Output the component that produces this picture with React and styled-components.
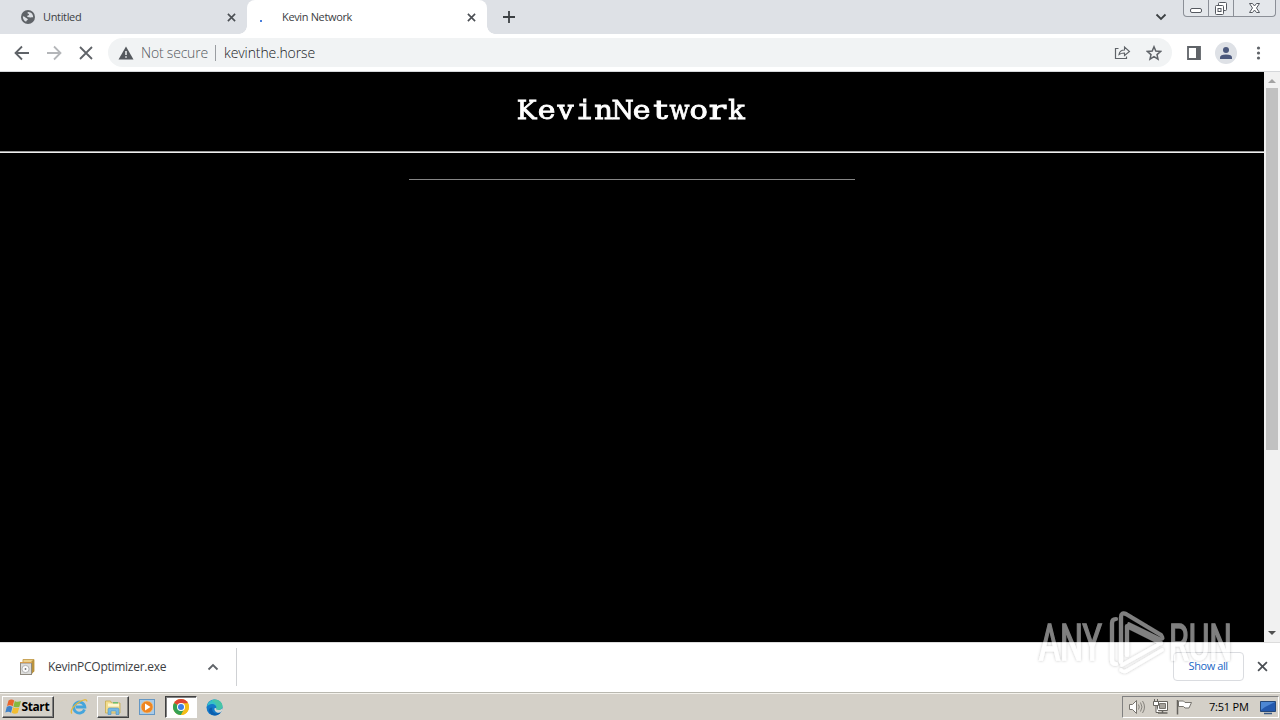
import React from "react";
import styled, { createGlobalStyle } from "styled-components";

const GlobalStyle = createGlobalStyle`
  * {
    box-sizing: border-box;
  }
  body {
    margin: 0;
    overflow: hidden;
    background: #000000;
  }
  svg {
    display: block;
    flex: none;
  }
`;

const Screen = styled.div`
  position: relative;
  width: 1280px;
  height: 720px;
  display: flex;
  flex-direction: column;
  overflow: hidden;
  font-family: "Open Sans", "Noto Sans", sans-serif;
  color: #3c4043;
`;

const Text = styled.span`
  display: block;
  flex: none;
  width: ${(p) => p.$width}px;
  margin-left: ${(p) => p.$gap || 0}px;
  font-size: ${(p) => p.$size || 11}px;
  line-height: 18px;
  letter-spacing: ${(p) => p.$spacing || 0}px;
  font-weight: ${(p) => p.$weight || 400};
  color: ${(p) => p.$color || "#3c4043"};
  white-space: nowrap;
`;

const TabStrip = styled.div`
  display: flex;
  height: 34px;
  flex: none;
  background: #dee1e6;
`;
const Tab = styled.div`
  display: flex;
  align-items: center;
  width: ${(p) => p.$width}px;
  height: 34px;
  padding: 0 11px 0 ${(p) => (p.$active ? 13 : 21)}px;
  border-radius: 8px 8px 0 0;
  background: ${(p) => (p.$active ? "#ffffff" : "transparent")};
`;
const Flare = styled.div`
  align-self: flex-end;
  width: 8px;
  height: 8px;
  margin-left: ${(p) => (p.$left ? -8 : 0)}px;
  background: radial-gradient(
    circle at ${(p) => (p.$left ? "0 0" : "100% 0")},
    transparent 7.5px,
    #ffffff 8px
  );
`;
const Spinner = styled.span`
  width: 2px;
  height: 2px;
  margin-right: 20px;
  margin-top: 7px;
  background: #4a7fdc;
`;
const Push = styled.div`
  flex: 1;
`;
const StripIcon = styled.div`
  padding: ${(p) => p.$pad};
`;
const WindowButtons = styled.div`
  display: flex;
  width: 93px;
  height: 17px;
  margin: 0 4px 0 16px;
  border: 1px solid #8b8f97;
  border-top: 0;
  border-radius: 0 0 4px 4px;
  background: #e4e7eb;
`;
const WindowButton = styled.div`
  display: flex;
  justify-content: center;
  width: ${(p) => p.$width}px;
  border-right: ${(p) => (p.$last ? 0 : 1)}px solid #8b8f97;
`;

const Toolbar = styled.div`
  display: flex;
  align-items: center;
  height: 38px;
  flex: none;
  padding: 0 13px;
  background: #ffffff;
  border-bottom: 1px solid #d5d7da;
`;
const NavButtons = styled.div`
  display: flex;
  gap: 14px;
  width: 95px;
`;
const AddressBar = styled.div`
  display: flex;
  align-items: center;
  width: 1064px;
  height: 29px;
  padding: 0 10px;
  border-radius: 15px;
  background: #f1f3f4;
`;
const Separator = styled.span`
  width: 1px;
  height: 16px;
  margin: 0 8px 0 7px;
  background: #9a9da1;
`;
const Avatar = styled.div`
  display: flex;
  align-items: center;
  justify-content: center;
  width: 22px;
  height: 22px;
  margin: 0 14px 0 14px;
  border-radius: 50%;
  background: #dee1e6;
`;

const Viewport = styled.div`
  display: flex;
  flex: none;
  height: 570px;
`;
const Page = styled.main`
  display: flex;
  flex-direction: column;
  align-items: center;
  width: 1264px;
  background: #000000;
`;
const Heading = styled.h1`
  display: flex;
  height: 36px;
  margin: 20px 0 23px;
  color: #ffffff;
  font-family: "DejaVu Serif", serif;
  font-size: 26px;
  font-weight: 400;
  line-height: 36px;
  -webkit-text-stroke: 0.8px #ffffff;
`;
const Letter = styled.span`
  display: flex;
  justify-content: center;
  width: 19.1px;
  transform: scaleX(${(p) => p.$stretch});
  font-family: ${(p) => (p.$mono ? '"DejaVu Sans Mono", monospace' : "inherit")};
`;
const WideRule = styled.div`
  width: 100%;
  height: 2px;
  background: #eeeeee;
  border-top: 1px solid #9a9a9a;
`;
const ShortRule = styled.div`
  width: 446px;
  height: 1px;
  margin-top: 26px;
  background: #858585;
`;
const Scrollbar = styled.div`
  display: flex;
  flex-direction: column;
  align-items: center;
  justify-content: space-between;
  width: 16px;
  background: #f1f1f1;
`;
const Thumb = styled.div`
  width: 12px;
  height: 362px;
  margin-bottom: auto;
  background: #c1c1c1;
`;

const Shelf = styled.div`
  display: flex;
  align-items: center;
  flex: none;
  height: 50px;
  padding: 0 12px 2px 19px;
  background: #ffffff;
  border-top: 1px solid #dcdcdc;
`;
const ShelfDivider = styled.div`
  width: 1px;
  height: 38px;
  margin-left: 17px;
  background: #cfd1d4;
`;
const ShowAll = styled.div`
  display: flex;
  align-items: center;
  justify-content: center;
  width: 71px;
  height: 29px;
  margin-right: 13px;
  padding-bottom: 1px;
  border: 1px solid #dadce0;
  border-radius: 4px;
`;

const Taskbar = styled.div`
  display: flex;
  align-items: center;
  flex: none;
  height: 28px;
  padding: 1px 1px 0 2px;
  background: #d4d0c8;
  border-top: 1px solid #b9b8b0;
  box-shadow: inset 0 1px 0 #f4f2ec;
`;
const TaskButton = styled.div`
  display: flex;
  align-items: center;
  justify-content: center;
  width: ${(p) => p.$width}px;
  height: 22px;
  margin-left: ${(p) => p.$gap || 0}px;
  background: ${(p) => (p.$pressed ? "#ffffff" : "#d4d0c8")};
  border: 1px solid;
  border-color: ${(p) =>
    p.$pressed ? "#404040 #ffffff #ffffff #404040" : "#ffffff #404040 #404040 #ffffff"};
  box-shadow: ${(p) => (p.$pressed ? "inset 1px 1px 0 #808080" : "inset -1px -1px 0 #808080")};
`;
const TaskIcon = styled.div`
  margin-left: ${(p) => p.$gap}px;
`;
const Tray = styled.div`
  display: flex;
  align-items: center;
  width: 157px;
  height: 22px;
  padding-left: 5px;
  border: 1px solid;
  border-color: #808080 #ffffff #ffffff #808080;
`;

const Watermark = styled.div`
  position: absolute;
  left: 1030px;
  top: 602px;
`;

const Cross = ({ size = 9, width = 1.8, color = "#4b4f54" }) => (
  <svg width={size} height={size} viewBox="0 0 10 10">
    <path d="M1 1l8 8M9 1l-8 8" stroke={color} strokeWidth={width} />
  </svg>
);

const Globe = () => (
  <svg width="14" height="14" viewBox="0 0 14 14">
    <circle cx="7" cy="7" r="7" fill="#5f6368" />
    <path d="M7.500 2c-1.500.2-1.200 1.500 0 1.800 1 .3.500 1.500-.5 1.700-1.200.2-1.200 1.300 0 1.500 1.500.2 2 .8 3 .4.800-.300 1.500-.200 2.200-.2C12.200 4.300 10.300 2.200 7.500 2zM1.900 6.200C1.500 8.500 3 11 5.200 11.800c0-1 .6-1.300 1.300-1.700.8-.6 0-1.500-.8-1.900C4.300 7.600 3.500 6.300 1.900 6.200z" fill="#dee1e6" />
  </svg>
);

const StartFlag = () => (
  <svg width="17" height="16" viewBox="0 0 17 16">
    <path d="M3.500 1.500c2-1.500 4-1.200 5.700 0L7.800 7.200c-1.800-1.300-3.700-1.200-5.800-.2z" fill="#e8652c" />
    <path d="M9.800 2c2 1.200 4 1 6.200 0l-1.600 5.700c-2 .9-4 .8-6-.3z" fill="#86b83f" />
    <path d="M1.800 7.700c2.200-1 4-.8 5.700.3l-1.500 5.700c-1.700-1.200-3.600-1.200-5.700-.2z" fill="#3f82c9" />
    <path d="M8.200 8.200c2 1.100 4 1.200 6.100.2l-1.600 5.700c-2.100 1-4.100.8-6-.3z" fill="#f2bd32" />
  </svg>
);

const ExplorerE = () => (
  <svg width="18" height="18" viewBox="0 0 18 18">
    <path d="M14.500 11.500A5.500 5.500 0 1 1 14.800 9H6" fill="none" stroke="#45a5dc" strokeWidth="2.900" />
    <path d="M2 15.500C-.5 13 4 7 9.500 3.800 13 1.500 17 .8 16.800 3.500" fill="none" stroke="#e4b83c" strokeWidth="1.300" />
  </svg>
);

const Folder = () => (
  <svg width="18" height="17" viewBox="0 0 18 17">
    <path d="M1.500 2h5l1 2h8.500v10h-14.500z" fill="#f2dc8d" stroke="#c6a94d" strokeWidth=".8" />
    <path d="M4 4.500h11v3H4z" fill="#fdf6cf" />
    <path d="M9 3h5v1.500H9z" fill="#6cbd70" />
    <path d="M4 15.500v-5q0-1.500 1.500-1.500h8q1.500 0 1.500 1.500v5h-3v-3.500H7v3.500z" fill="#74b8e4" stroke="#4e91bf" strokeWidth=".6" />
  </svg>
);

const MediaPlayer = () => (
  <svg width="16" height="16" viewBox="0 0 16 16">
    <rect x=".5" y=".5" width="15" height="15" fill="#a9cbe8" stroke="#6497c4" />
    <circle cx="8" cy="8" r="6" fill="#ee8521" stroke="#f7c078" strokeWidth=".7" />
    <path d="M6 4.500v7L11.500 8z" fill="#ffffff" />
  </svg>
);

const Chrome = () => (
  <svg width="16" height="16" viewBox="0 0 16 16">
    <circle cx="8" cy="8" r="8" fill="#f4bd18" />
    <path d="M8 8L1.070 4A8 8 0 0 1 14.930 4z" fill="#df4534" />
    <path d="M8 8L1.070 4A8 8 0 0 0 8 16l3.400-6z" fill="#35a154" />
    <path d="M8 4.300h7.100A8 8 0 0 1 8 16l3.300-6z" fill="#f4bd18" />
    <circle cx="8" cy="8" r="4" fill="#ffffff" />
    <circle cx="8" cy="8" r="3" fill="#3d7fe6" />
  </svg>
);

const Edge = () => (
  <svg width="17" height="17" viewBox="0 0 17 17">
    <circle cx="8.500" cy="8.500" r="8" fill="#1479c9" />
    <path d="M1 7.500C2 2.500 5.500.5 8.500.5c4.500 0 8 3.200 8 6.700 0 2.500-2 3.800-4.200 3.800-2 0-2.800-.8-2-1.800C11 7 8.500 5 6 5 3.500 5 1.500 6.500 1 7.500z" fill="#35c1c9" />
    <path d="M9 .5c4.500.2 7.500 3.400 7.500 6.700 0 2.500-2 3.800-4.200 3.800-2 0-2.500-.9-2-1.800C11.500 6 9 3 5.500 2z" fill="#55c98b" opacity=".55" />
    <path d="M6.500 8.500c-1.500 3 1.500 6.500 5.500 5.800 1.300-.2 2.200-.7 3-1.300-2.500 4.500-9 4.500-11.500.5-1.500-3 0-5 3-5z" fill="#0c5fae" />
    <path d="M10.300 9c-.7 1 .2 2 2 2 1.500 0 2.700-.4 3.500-1.300l.7 1.500-1.700 2c-3 1.500-7-.7-6.300-4z" fill="#d4d8d4" />
  </svg>
);

const Installer = () => (
  <svg width="16" height="18" viewBox="0 0 16 18">
    <path d="M4 1.500h11v12H4z" fill="#ecd08a" stroke="#c9a55a" />
    <path d="M12.500 3l2.500-1.500v12l-2.500 3z" fill="#b9923e" />
    <rect x="1.500" y="5" width="11" height="11.500" fill="#dddddb" stroke="#8f8a80" />
    <circle cx="6.500" cy="11" r="3.600" fill="#fafafa" stroke="#b5b5b5" />
    <circle cx="6.500" cy="11" r=".9" fill="#777777" />
    <path d="M1 4.500h12" stroke="#d79d4c" />
  </svg>
);

const Speaker = () => (
  <svg width="18" height="16" viewBox="0 0 18 16">
    <path d="M1.500 5.500h3l4-4v13l-4-4h-3z" fill="#fdfdfd" stroke="#77746e" />
    <path d="M10.500 5.500q1.500 2.500 0 5M12.500 3.500q3 4.500 0 9M14.500 2q4 6 0 12" fill="none" stroke="#86837d" />
  </svg>
);

const Network = () => (
  <svg width="17" height="16" viewBox="0 0 17 16">
    <path d="M5.500 2.500h10v9h-10z" fill="#ffffff" stroke="#66635e" />
    <path d="M7.500 4.500h6v5h-6z" fill="#a5a29c" stroke="#77746e" />
    <path d="M6 14h9.500M10.500 12v2" stroke="#66635e" strokeWidth="1.500" />
    <path d="M1.500 2.500h5v4h-5zM2.500 0v2M5.500 0v2M4 7v6.500h3" fill="#ffffff" stroke="#66635e" />
  </svg>
);

const ActionFlag = () => (
  <svg width="17" height="16" viewBox="0 0 17 16">
    <path d="M2.500 2h5l1.500 1.500h6.500L13 9H9L7.500 7.500h-5z" fill="#ffffff" stroke="#77746e" />
    <path d="M1.500 1v14.500" stroke="#66635e" strokeWidth="1.500" />
  </svg>
);

const Monitor = () => (
  <svg width="16" height="15" viewBox="0 0 16 15">
    <path d="M.5 1.500h15v10H.5z" fill="#2459ad" stroke="#254878" />
    <path d="M1 2h14L5 7 1 10z" fill="#4d87d3" />
    <path d="M4 13.500h8" stroke="#385883" strokeWidth="1.500" />
  </svg>
);

const WatermarkLogo = () => (
  <svg width="212" height="80" viewBox="0 0 212 80">
    <defs>
      <filter id="edge" x="-10%" y="-10%" width="120%" height="120%">
        <feDropShadow dx="0" dy="0" stdDeviation="1.800" floodColor="#000000" floodOpacity=".5" />
      </filter>
    </defs>
    <g opacity=".5" filter="url(#edge)" fill="#ffffff" stroke="#ffffff" fontFamily="Roboto, sans-serif" fontSize="50">
      <g strokeWidth="1.400">
        <text x="9" y="57.500" textLength="63" lengthAdjust="spacingAndGlyphs">ANY</text>
        <text x="139" y="57.500" textLength="63" lengthAdjust="spacingAndGlyphs">RUN</text>
      </g>
      <g fill="none" strokeWidth="4.200" strokeLinejoin="round" strokeLinecap="round">
        <path d="M86 17q-4 0-4 4v37q0 4 4 4" />
        <path d="M91 60V15q0-5 5-3l35 21M97 53V24l34 17" />
        <path d="M131 33q4 4-1 4L99 22M131 41L99 59M92 63l34-19M91 68q3 3 7 0l34-20" strokeWidth="3.600" />
      </g>
    </g>
  </svg>
);

const stretch = { K: 1.02, e: 1.15, v: 1.1, i: 1.02, n: 1.12, N: 0.98, t: 1.4, w: 0.9, o: 1.17, r: 1.4, k: 1.05 };

const App = () => {
  return (
    <Screen>
      <GlobalStyle />
      <TabStrip>
        <Tab $width={247}>
          <Globe />
          <Text $width={38} $gap={8} $spacing={-0.35}>Untitled</Text>
          <Push />
          <Cross />
        </Tab>
        <Flare $left />
        <Tab $width={240} $active>
          <Spinner />
          <Text $width={71} $spacing={-0.35}>Kevin Network</Text>
          <Push />
          <Cross />
        </Tab>
        <Flare />
        <StripIcon $pad="11px 0 0 8px">
          <svg width="12" height="12" viewBox="0 0 12 12">
            <path d="M6 0v12M0 6h12" stroke="#3c4043" strokeWidth="1.800" />
          </svg>
        </StripIcon>
        <Push />
        <StripIcon $pad="13px 0 0">
          <svg width="12" height="8" viewBox="0 0 12 8">
            <path d="M1.500 1.500L6 6l4.500-4.500" fill="none" stroke="#3c4043" strokeWidth="1.800" />
          </svg>
        </StripIcon>
        <WindowButtons>
          <WindowButton $width={25}>
            <svg width="13" height="16" viewBox="0 0 13 16">
              <rect x=".5" y="8.500" width="11" height="4" rx="1.500" fill="#ffffff" stroke="#555960" />
            </svg>
          </WindowButton>
          <WindowButton $width={25}>
            <svg width="14" height="16" viewBox="0 0 14 16">
              <rect x="4.500" y="2.500" width="8" height="8" rx="1" fill="#ffffff" stroke="#555960" />
              <rect x="1.500" y="5.500" width="8" height="9" rx="1" fill="#ffffff" stroke="#555960" />
              <rect x="4" y="8.500" width="3" height="3" fill="#ffffff" stroke="#555960" />
            </svg>
          </WindowButton>
          <WindowButton $width={41} $last>
            <svg width="13" height="16" viewBox="0 0 13 16">
              <path d="M1.500 3.500h3l2 2.500 2-2.500h3L8.500 8l3 4.500h-3l-2-2.500-2 2.500h-3l3-4.500z" fill="#ffffff" stroke="#555960" />
            </svg>
          </WindowButton>
        </WindowButtons>
      </TabStrip>

      <Toolbar>
        <NavButtons>
          <svg width="18" height="18" viewBox="0 0 18 18">
            <path d="M16 9H3M9 2.500L2.500 9 9 15.500" fill="none" stroke="#5f6368" strokeWidth="1.800" />
          </svg>
          <svg width="18" height="18" viewBox="0 0 18 18">
            <path d="M2 9h13M9 2.500L15.500 9 9 15.500" fill="none" stroke="#b4b6b9" strokeWidth="1.800" />
          </svg>
          <svg width="18" height="18" viewBox="0 0 18 18">
            <path d="M3 3l12 12M15 3L3 15" stroke="#5f6368" strokeWidth="1.800" />
          </svg>
        </NavButtons>
        <AddressBar>
          <svg width="16" height="14" viewBox="0 0 16 14">
            <path d="M8 .5L15.500 13.500H.5z" fill="#55595e" />
            <path d="M8 5v4M8 10.300v1.500" stroke="#f1f3f4" strokeWidth="1.500" />
          </svg>
          <Text $width={67} $gap={7} $size={14} $spacing={-0.2} $weight={300} $color="#55595e">
            Not secure
          </Text>
          <Separator />
          <Text $width={91} $size={14} $spacing={-0.1} $weight={300} $color="#202124">
            kevinthe.horse
          </Text>
          <Push />
          <svg width="17" height="15" viewBox="0 0 17 15">
            <path d="M4.500 3.500h-3v10h11v-2" fill="none" stroke="#5f6368" strokeWidth="1.200" />
            <path d="M5 9.500c.5-3 2.500-4.500 5.500-4.500V2l5 4.500-5 4V8C8 8 6.500 8.300 5 9.500z" fill="none" stroke="#5f6368" strokeWidth="1.100" />
          </svg>
          <svg width="16" height="16" viewBox="0 0 16 16" style={{ marginLeft: 15 }}>
            <path d="M8 1.800l1.800 4.300 4.700.4-3.500 3.100 1 4.600-4-2.500-4 2.500 1-4.600-3.500-3.100 4.700-.4z" fill="none" stroke="#5f6368" strokeWidth="1.500" />
          </svg>
        </AddressBar>
        <svg width="14" height="14" viewBox="0 0 14 14" style={{ marginLeft: 15 }}>
          <path d="M1 1h12v12H1z" fill="none" stroke="#5f6368" strokeWidth="1.800" />
          <path d="M9 1h4v12H9z" fill="#5f6368" />
        </svg>
        <Avatar>
          <svg width="14" height="14" viewBox="0 0 14 14">
            <circle cx="7" cy="4" r="3" fill="#4b587c" />
            <path d="M1 13v-1.500q0-3 6-3t6 3V13z" fill="#4b587c" />
          </svg>
        </Avatar>
        <svg width="16" height="16" viewBox="0 0 16 16">
          <circle cx="7.500" cy="3" r="1.600" fill="#5f6368" />
          <circle cx="7.500" cy="8" r="1.600" fill="#5f6368" />
          <circle cx="7.500" cy="13" r="1.600" fill="#5f6368" />
        </svg>
      </Toolbar>

      <Viewport>
        <Page>
          <Heading>
            {"KevinNetwork".split("").map((char, index) => (
              <Letter key={index} $stretch={stretch[char]} $mono={char === "i"}>
                {char}
              </Letter>
            ))}
          </Heading>
          <WideRule />
          <ShortRule />
        </Page>
        <Scrollbar>
          <svg width="16" height="16" viewBox="0 0 16 16">
            <path d="M4 11h8L8 7z" fill="#a3a3a3" />
          </svg>
          <Thumb />
          <svg width="16" height="18" viewBox="0 0 16 18">
            <path d="M4 7h8l-4 4z" fill="#505050" />
          </svg>
        </Scrollbar>
      </Viewport>

      <Shelf>
        <Installer />
        <Text $width={119} $gap={13} $size={12} $spacing={-0.27}>KevinPCOptimizer.exe</Text>
        <svg width="12" height="8" viewBox="0 0 12 8" style={{ marginLeft: 40 }}>
          <path d="M1.500 6.500L6 2l4.500 4.500" fill="none" stroke="#5f6368" strokeWidth="1.800" />
        </svg>
        <ShelfDivider />
        <Push />
        <ShowAll>
          <Text $width={40} $spacing={-0.4} $color="#1a67c5">Show all</Text>
        </ShowAll>
        <Cross size={11} width={1.6} />
      </Shelf>

      <Taskbar>
        <TaskButton $width={52}>
          <StartFlag />
          <Text $width={30} $weight={700} $size={12} $spacing={-0.4} $color="#000000">Start</Text>
        </TaskButton>
        <TaskIcon $gap={16}><ExplorerE /></TaskIcon>
        <TaskButton $width={32} $gap={9}><Folder /></TaskButton>
        <TaskIcon $gap={10}><MediaPlayer /></TaskIcon>
        <TaskButton $width={32} $gap={10} $pressed><Chrome /></TaskButton>
        <TaskIcon $gap={9}><Edge /></TaskIcon>
        <Push />
        <Tray>
          <Speaker />
          <TaskIcon $gap={6}><Network /></TaskIcon>
          <TaskIcon $gap={7}><ActionFlag /></TaskIcon>
          <Text $width={40} $gap={16} $spacing={-0.2} $color="#000000">7:51 PM</Text>
          <TaskIcon $gap={11}><Monitor /></TaskIcon>
        </Tray>
      </Taskbar>

      <Watermark>
        <WatermarkLogo />
      </Watermark>
    </Screen>
  );
};

export default App;
